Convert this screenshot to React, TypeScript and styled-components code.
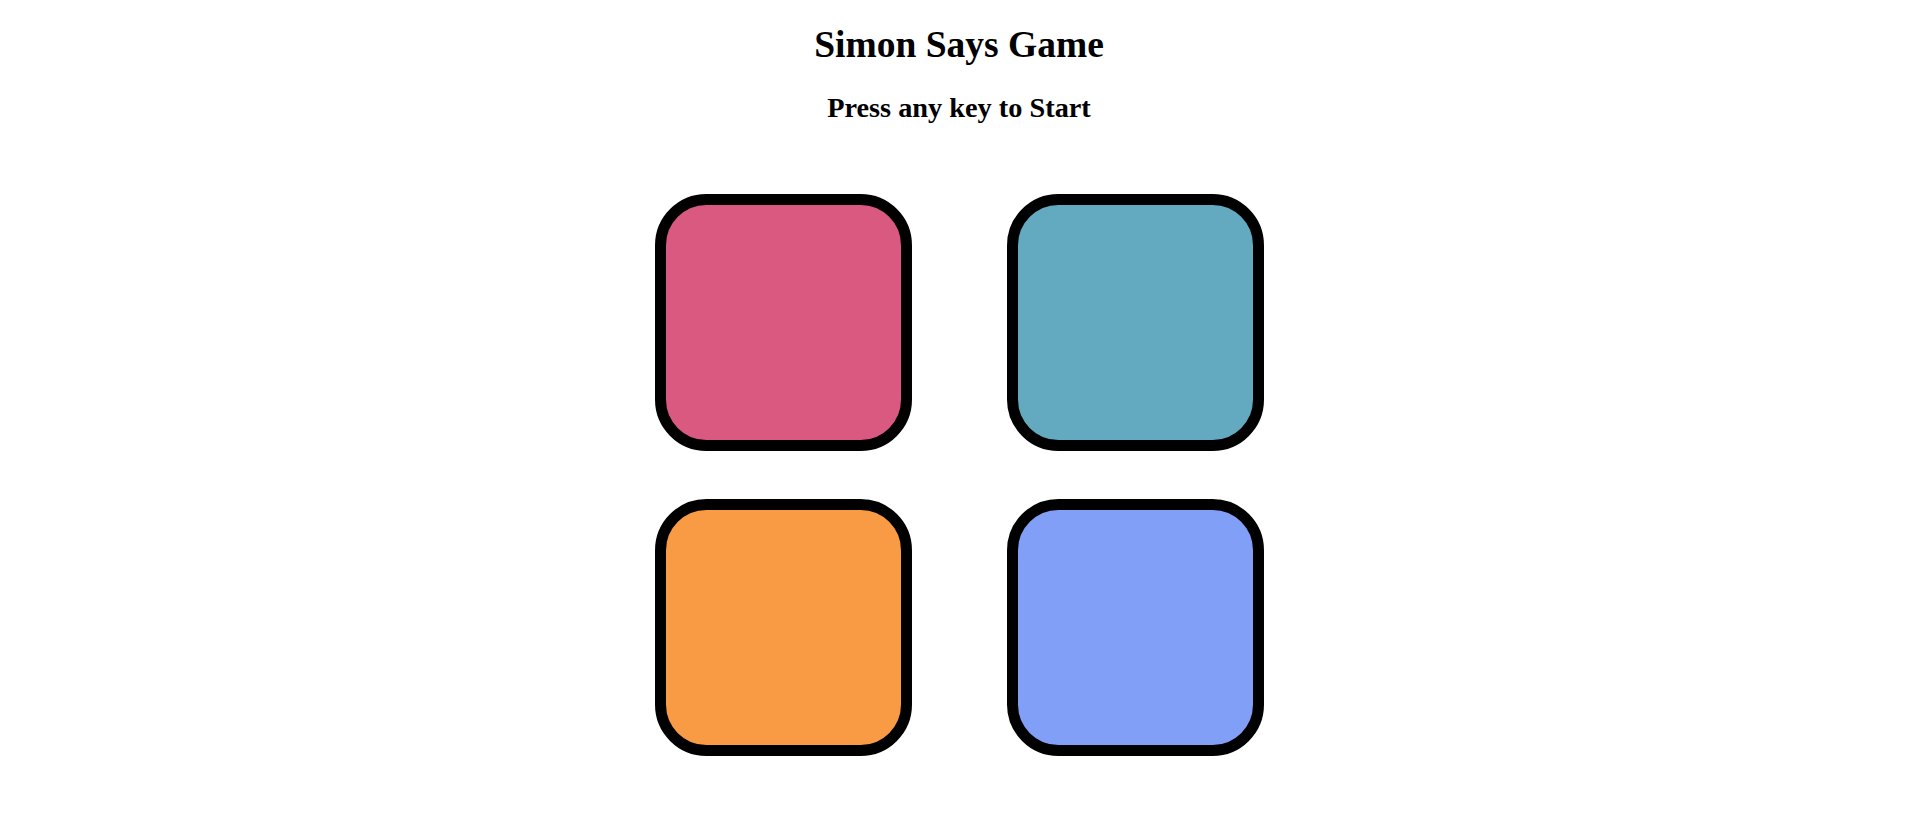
import React from 'react';
import styled, { createGlobalStyle } from 'styled-components';

const GlobalStyle = createGlobalStyle`
    html, body {
        margin: 0;
        padding: 0;
        background: #fff;
    }

    body {
        font-family: "Liberation Serif", "Times New Roman", serif;
        color: #000;
    }
`;

type Colour = 'red' | 'green' | 'yellow' | 'purple';

const colours: Record<Colour, string> = {
    red: '#d95980',
    green: '#63aac0',
    yellow: '#f99b45',
    purple: '#819ff7',
};

export default function App() {
    const buttons: Colour[] = ['red', 'green', 'yellow', 'purple'];

    return (
        <Page>
            <GlobalStyle />
            <Title>Simon Says Game</Title>
            <Status>Press any key to Start</Status>
            <Board>
                {buttons.map((c) => (
                    <GameButton key={c} id={c} colour={c} />
                ))}
            </Board>
        </Page>
    );
}

const Page = styled.div`
    display: flex;
    flex-direction: column;
    align-items: center;
    padding-top: 23px;
    text-align: center;
`;

const Title = styled.h1`
    margin: 0;
    font-size: 37.5px;
    line-height: 43px;
    font-weight: 700;
`;

const Status = styled.h2`
    margin: 26px 0 0;
    font-size: 28.3px;
    line-height: 32px;
    font-weight: 700;
`;

const Board = styled.div`
    display: grid;
    grid-template-columns: repeat(2, 257px);
    grid-auto-rows: 257px;
    column-gap: 95px;
    row-gap: 48px;
    margin-top: 70px;
`;

const GameButton = styled.div<{ colour: Colour }>`
    box-sizing: border-box;
    width: 257px;
    height: 257px;
    border: 11px solid #000;
    border-radius: 20%;
    background-color: ${(p) => colours[p.colour]};
`;
